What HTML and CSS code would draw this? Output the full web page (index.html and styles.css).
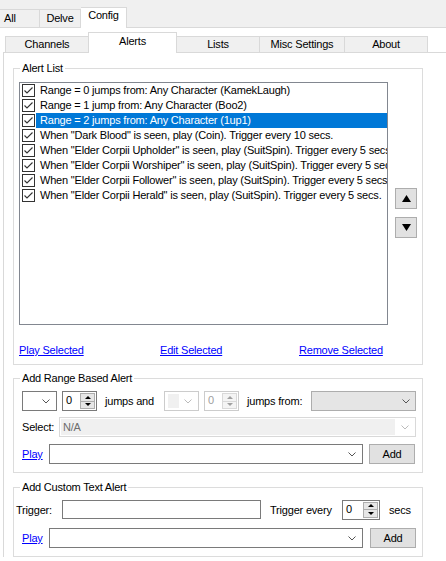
FILE: index.html
```html
<!DOCTYPE html>
<html lang="en">
<head>
    <meta charset="UTF-8">
    <title>Config - Alerts</title>
    <link rel="stylesheet" href="styles.css">
</head>
<body>
    <div class="outer-tabs">
        <div class="otab otab-all">All</div>
        <div class="otab otab-delve">Delve</div>
        <div class="otab otab-config active">Config</div>
    </div>

    <div class="outer-page">
        <div class="inner-tabs">
            <div class="itab w-channels">Channels</div>
            <div class="itab w-alerts active">Alerts</div>
            <div class="itab w-lists">Lists</div>
            <div class="itab w-misc">Misc Settings</div>
            <div class="itab w-about last">About</div>
        </div>

        <div class="inner-page">
            <!-- Alert list -->
            <fieldset class="group group-list">
                <legend>Alert List</legend>
                <div class="list-row">
                    <div class="listbox">
                        <div class="item"><span class="check"><svg width="13" height="13" viewBox="0 0 13 13"><path d="M2.5 6.5 L5 9 L10.5 3.5" fill="none" stroke="#333" stroke-width="1.1"/></svg></span><span class="text">Range = 0 jumps from: Any Character (KamekLaugh)</span></div>
                        <div class="item"><span class="check"><svg width="13" height="13" viewBox="0 0 13 13"><path d="M2.5 6.5 L5 9 L10.5 3.5" fill="none" stroke="#333" stroke-width="1.1"/></svg></span><span class="text">Range = 1 jump from: Any Character (Boo2)</span></div>
                        <div class="item selected"><span class="check"><svg width="13" height="13" viewBox="0 0 13 13"><path d="M2.5 6.5 L5 9 L10.5 3.5" fill="none" stroke="#333" stroke-width="1.1"/></svg></span><span class="text">Range = 2 jumps from: Any Character (1up1)</span></div>
                        <div class="item"><span class="check"><svg width="13" height="13" viewBox="0 0 13 13"><path d="M2.5 6.5 L5 9 L10.5 3.5" fill="none" stroke="#333" stroke-width="1.1"/></svg></span><span class="text">When "Dark Blood" is seen, play (Coin). Trigger every 10 secs.</span></div>
                        <div class="item"><span class="check"><svg width="13" height="13" viewBox="0 0 13 13"><path d="M2.5 6.5 L5 9 L10.5 3.5" fill="none" stroke="#333" stroke-width="1.1"/></svg></span><span class="text">When "Elder Corpii Upholder" is seen, play (SuitSpin). Trigger every 5 secs.</span></div>
                        <div class="item"><span class="check"><svg width="13" height="13" viewBox="0 0 13 13"><path d="M2.5 6.5 L5 9 L10.5 3.5" fill="none" stroke="#333" stroke-width="1.1"/></svg></span><span class="text">When "Elder Corpii Worshiper" is seen, play (SuitSpin). Trigger every 5 secs.</span></div>
                        <div class="item"><span class="check"><svg width="13" height="13" viewBox="0 0 13 13"><path d="M2.5 6.5 L5 9 L10.5 3.5" fill="none" stroke="#333" stroke-width="1.1"/></svg></span><span class="text">When "Elder Corpii Follower" is seen, play (SuitSpin). Trigger every 5 secs.</span></div>
                        <div class="item"><span class="check"><svg width="13" height="13" viewBox="0 0 13 13"><path d="M2.5 6.5 L5 9 L10.5 3.5" fill="none" stroke="#333" stroke-width="1.1"/></svg></span><span class="text">When "Elder Corpii Herald" is seen, play (SuitSpin). Trigger every 5 secs.</span></div>
                    </div>
                    <div class="move-buttons">
                        <div class="btn square"><svg width="9" height="7" viewBox="0 0 9 7"><polygon points="4.5,0 9,7 0,7" fill="#000"/></svg></div>
                        <div class="btn square"><svg width="9" height="7" viewBox="0 0 9 7"><polygon points="0,0 9,0 4.5,7" fill="#000"/></svg></div>
                    </div>
                </div>
                <div class="link-row">
                    <a class="link l-play">Play Selected</a>
                    <a class="link l-edit">Edit Selected</a>
                    <a class="link">Remove Selected</a>
                </div>
            </fieldset>

            <!-- Add range based alert -->
            <fieldset class="group group-range">
                <legend>Add Range Based Alert</legend>
                <div class="row r1">
                    <div class="combo c-small"><span class="chev"><svg width="8" height="5" viewBox="0 0 8 5"><polyline points="0.5,0.5 4,4 7.5,0.5" fill="none" stroke="#555"/></svg></span></div>
                    <div class="numeric n-a"><span class="num">0</span><span class="spin"><span class="up"><i class="tri-up"></i></span><span class="down"><i class="tri-down"></i></span></span></div>
                    <span class="label lb-jumps">jumps and</span>
                    <div class="combo c-small disabled"><span class="sel-block"></span><span class="chev"><svg width="8" height="5" viewBox="0 0 8 5"><polyline points="0.5,0.5 4,4 7.5,0.5" fill="none" stroke="#bbb"/></svg></span></div>
                    <div class="numeric n-b disabled"><span class="num">0</span><span class="spin"><span class="up"><i class="tri-up"></i></span><span class="down"><i class="tri-down"></i></span></span></div>
                    <span class="label lb-from">jumps from:</span>
                    <div class="combo c-from"><span class="chev"><svg width="8" height="5" viewBox="0 0 8 5"><polyline points="0.5,0.5 4,4 7.5,0.5" fill="none" stroke="#555"/></svg></span></div>
                </div>
                <div class="row r2">
                    <span class="label lb-select">Select:</span>
                    <div class="combo c-select"><span class="na">N/A</span><span class="chev"><svg width="8" height="5" viewBox="0 0 8 5"><polyline points="0.5,0.5 4,4 7.5,0.5" fill="none" stroke="#bbb"/></svg></span></div>
                </div>
                <div class="row r3">
                    <a class="link lb-play">Play</a>
                    <div class="combo c-sound"><span class="chev"><svg width="8" height="5" viewBox="0 0 8 5"><polyline points="0.5,0.5 4,4 7.5,0.5" fill="none" stroke="#555"/></svg></span></div>
                    <div class="btn add">Add</div>
                </div>
            </fieldset>

            <!-- Add custom text alert -->
            <fieldset class="group group-custom">
                <legend>Add Custom Text Alert</legend>
                <div class="row r4">
                    <span class="label lb-trigger">Trigger:</span>
                    <div class="textbox"></div>
                    <span class="label lb-every">Trigger every</span>
                    <div class="numeric n-c"><span class="num">0</span><span class="spin"><span class="up"><i class="tri-up"></i></span><span class="down"><i class="tri-down"></i></span></span></div>
                    <span class="label lb-secs">secs</span>
                </div>
                <div class="row r5">
                    <a class="link lb-play">Play</a>
                    <div class="combo c-sound"><span class="chev"><svg width="8" height="5" viewBox="0 0 8 5"><polyline points="0.5,0.5 4,4 7.5,0.5" fill="none" stroke="#555"/></svg></span></div>
                    <div class="btn add add2">Add</div>
                </div>
            </fieldset>
        </div>
    </div>
</body>
</html>
```

FILE: styles.css
```css
* {
    box-sizing: border-box;
}

body {
    margin: 0;
    width: 446px;
    height: 561px;
    overflow: hidden;
    background: #f0f0f0;
    font-family: "Liberation Sans", Arial, sans-serif;
    font-size: 11px;
    letter-spacing: -0.2px;
    color: #000;
}

/* outer tab strip */
.outer-tabs {
    display: flex;
    align-items: flex-end;
    height: 27px;
}

.otab {
    height: 18px;
    border: 1px solid #d9d9d9;
    border-bottom: none;
    border-left: none;
    background: #f0f0f0;
    line-height: 16px;
    text-align: center;
}

.otab-all { width: 40px; text-align: left; padding-left: 4px; }
.otab-delve { width: 41px; }
.otab-config { width: 46px; }

.otab.active {
    height: 21px;
    margin-bottom: -1px;
    background: #fff;
    line-height: 14px;
    position: relative;
    z-index: 1;
}

.outer-page {
    background: #fff;
    border-top: 1px solid #d9d9d9;
    padding: 4px 0 0 3px;
    height: 534px;
}

/* inner tab strip */
.inner-tabs {
    display: flex;
    align-items: flex-end;
    height: 20px;
    margin-left: 2px;
}

.itab {
    height: 16px;
    border: 1px solid #d9d9d9;
    border-bottom: none;
    border-right: none;
    background: #f0f0f0;
    text-align: center;
    line-height: 14px;
}

.itab.last { border-right: 1px solid #d9d9d9; }

.w-channels { width: 83px; }
.w-alerts { width: 89px; }
.w-lists { width: 83px; }
.w-misc { width: 85px; }
.w-about { width: 84px; }

.itab.active {
    height: 21px;
    margin-bottom: -1px;
    margin-right: -1px;
    border-right: 1px solid #d9d9d9;
    background: #fff;
    line-height: 16px;
    position: relative;
    z-index: 1;
}

.inner-page {
    width: 443px;
    height: 505px;
    border-top: 1px solid #d9d9d9;
    border-left: 1px solid #d9d9d9;
    padding: 9px 0 0 9px;
}

/* group boxes */
.group {
    margin: 0;
    width: 410px;
    border: 1px solid #dcdcdc;
    padding: 0 5px;
    min-width: 0;
}

.group legend {
    padding: 0 2px;
    margin-left: 1px;
    line-height: 13px;
    height: 13px;
}

.group-list { height: 303px; }
.group-range { height: 101px; margin-top: 7px; }
.group-custom { height: 76px; margin-top: 8px; }

/* alert list */
.list-row {
    display: flex;
    margin-top: 7px;
}

.listbox {
    width: 369px;
    height: 243px;
    border: 1px solid #828790;
    overflow: hidden;
}

.item {
    display: flex;
    height: 15px;
    white-space: nowrap;
}

.check {
    display: block;
    width: 13px;
    height: 13px;
    margin: 1px 1px 0 2px;
    border: 1px solid #333;
    background: #fff;
    flex-shrink: 0;
}

.check svg {
    display: block;
    margin: -1px 0 0 -1px;
}

.item .text {
    flex: 1;
    padding-left: 4px;
    line-height: 15px;
    overflow: hidden;
    letter-spacing: -0.2px;
}

.item.selected .text {
    background: #0078d7;
    color: #fff;
}

.move-buttons {
    display: flex;
    flex-direction: column;
    gap: 8px;
    margin: 106px 0 0 7px;
}

.btn {
    background: #e1e1e1;
    border: 1px solid #adadad;
    display: flex;
    align-items: center;
    justify-content: center;
}

.btn.square {
    width: 22px;
    height: 21px;
}

.link-row {
    display: flex;
    margin-top: 19px;
    line-height: 13px;
}

.link {
    color: #0000ff;
    text-decoration: underline;
}

.l-play { width: 141px; }
.l-edit { width: 139px; }

/* form rows */
.row {
    display: flex;
    align-items: center;
    white-space: nowrap;
}

.r1 { margin-top: 6px; height: 20px; }
.r2 { margin-top: 6px; height: 20px; }
.r3 { margin-top: 7px; height: 20px; }
.r4 { margin-top: 6px; height: 19px; }
.r5 { margin-top: 9px; height: 20px; }

.combo {
    position: relative;
    height: 20px;
    border: 1px solid #7a7a7a;
    background: #fff;
    flex-shrink: 0;
}

.chev {
    position: absolute;
    right: 6px;
    top: 7px;
    line-height: 0;
}

.chev svg { display: block; }

.c-small { width: 35px; margin-left: 3px; }
.c-small.disabled {
    margin-left: 0;
    border-color: #cccccc;
}

.sel-block {
    position: absolute;
    left: 3px;
    top: 2px;
    width: 11px;
    height: 14px;
    background: #f0f0f0;
}

.c-from {
    width: 105px;
    background: #e5e5e5;
    border-color: #adadad;
}

.c-from .chev { right: 5px; }

.c-select {
    width: 357px;
    border-color: #d9d9d9;
}

.c-select .na {
    display: block;
    margin: 1px 0 0 1px;
    width: 334px;
    height: 16px;
    background: #f0f0f0;
    color: #6d6d6d;
    line-height: 16px;
    padding-left: 2px;
}

.c-sound { width: 314px; }

.numeric {
    display: flex;
    height: 20px;
    border: 1px solid #7a7a7a;
    background: #fff;
    flex-shrink: 0;
}

.numeric .num {
    flex: 1;
    padding-left: 3px;
    line-height: 17px;
}

.numeric.disabled { border-color: #cccccc; }
.numeric.disabled .num { color: #a0a0a0; }

.spin {
    display: flex;
    flex-direction: column;
    width: 15px;
    margin: 1px 1px 1px 0;
}

.spin .up,
.spin .down {
    flex: 1;
    display: flex;
    align-items: center;
    justify-content: center;
    background: #e6e6e6;
    border: 1px solid #adadad;
}

.spin .down { border-top: none; }

.numeric.disabled .spin .up,
.numeric.disabled .spin .down {
    background: #f4f4f4;
    border-color: #d9d9d9;
}

.tri-up {
    width: 0;
    height: 0;
    border-left: 3px solid transparent;
    border-right: 3px solid transparent;
    border-bottom: 3px solid #000;
}

.tri-down {
    width: 0;
    height: 0;
    border-left: 3px solid transparent;
    border-right: 3px solid transparent;
    border-top: 3px solid #000;
}

.numeric.disabled .tri-up { border-bottom-color: #a0a0a0; }
.numeric.disabled .tri-down { border-top-color: #a0a0a0; }

.n-a { width: 35px; margin-left: 5px; }
.n-b { width: 35px; margin-left: 5px; }
.n-c { width: 38px; }

.label { flex-shrink: 0; }

.lb-jumps { width: 59px; margin-left: 8px; }
.lb-from { width: 64px; margin-left: 8px; }
.lb-select { width: 37px; margin-left: 3px; }
.lb-play { width: 27px; margin-left: 3px; }
.lb-trigger { width: 46px; margin-left: -3px; }
.lb-every { width: 72px; margin-left: 9px; }
.lb-secs { margin-left: 9px; }

.textbox {
    width: 199px;
    height: 19px;
    border: 1px solid #7a7a7a;
    background: #fff;
    flex-shrink: 0;
}

.btn.add {
    width: 46px;
    height: 20px;
    margin-left: 6px;
}

.btn.add2 { margin-left: 7px; }
```
